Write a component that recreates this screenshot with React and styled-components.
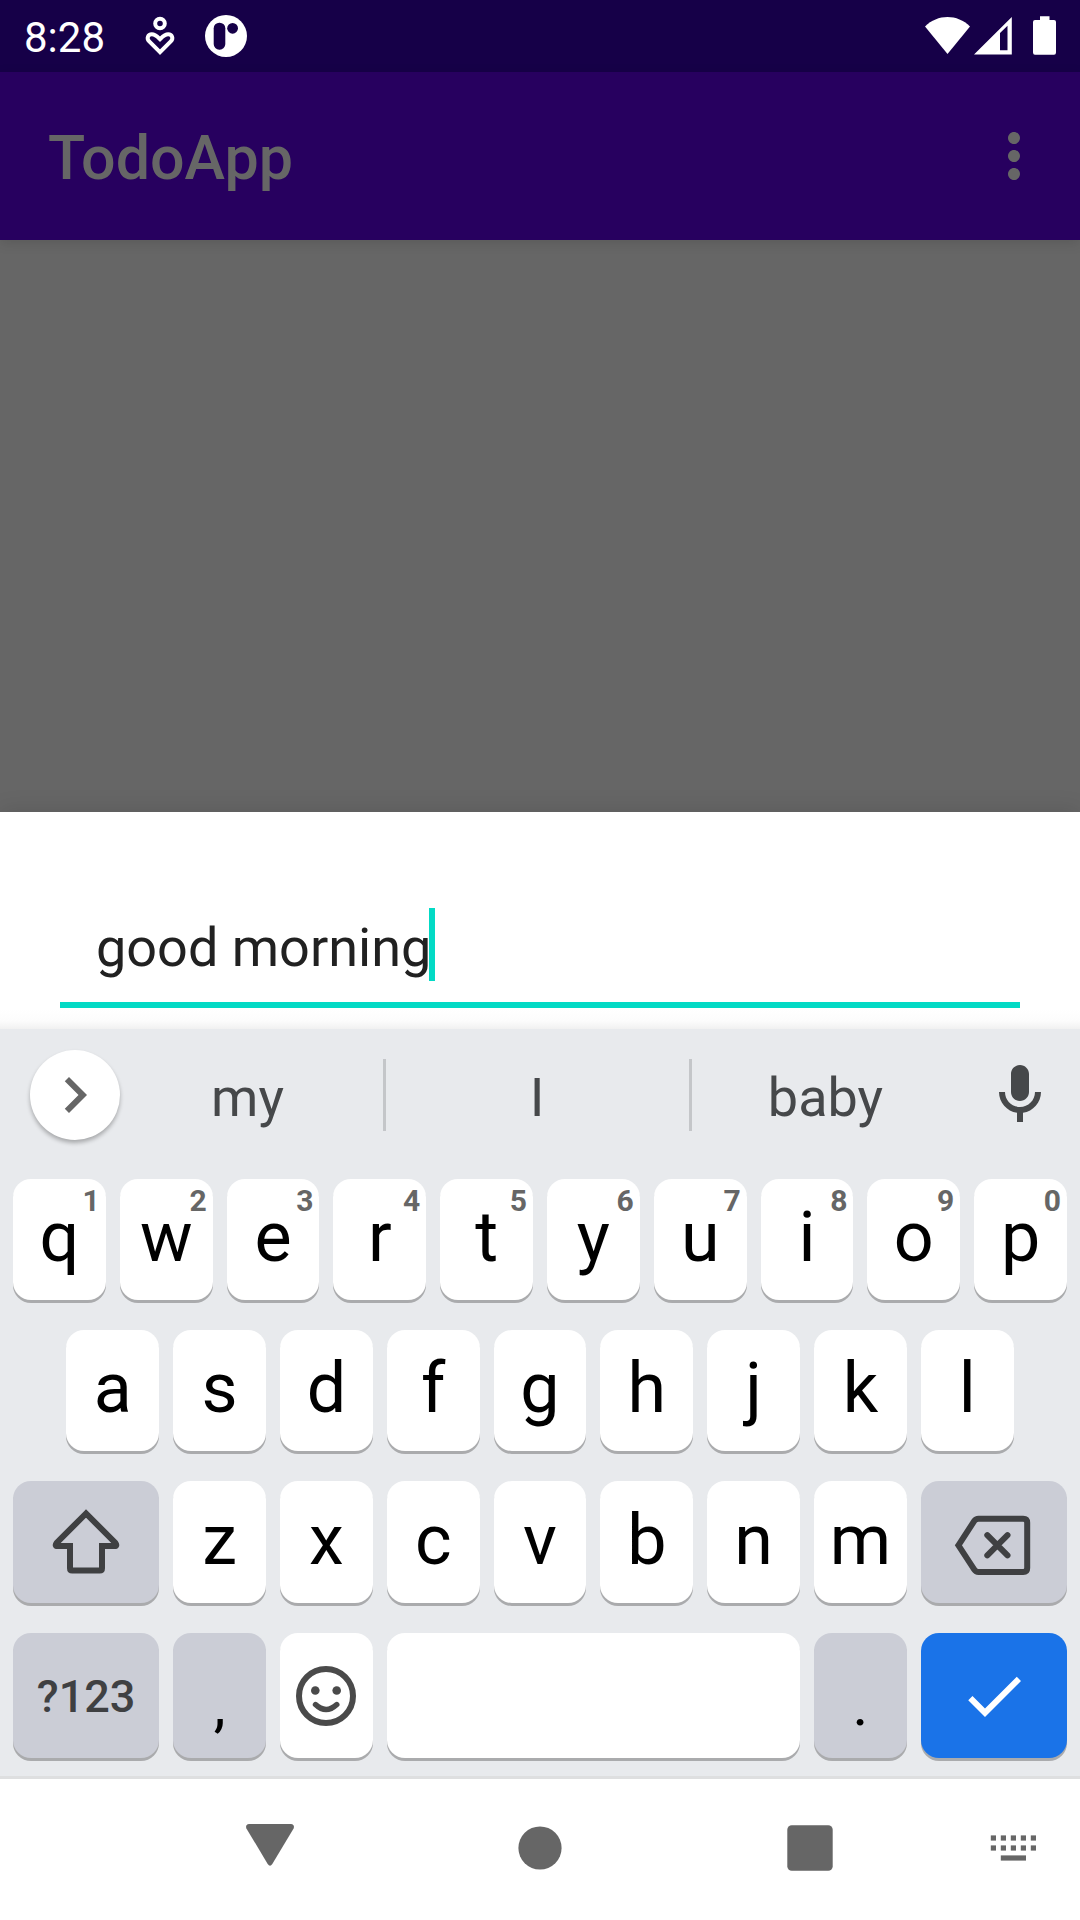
import React, { useState } from "react";
import styled, { createGlobalStyle } from "styled-components";

const GlobalStyle = createGlobalStyle`
  * { box-sizing: border-box; }
  body { margin: 0; background: #ffffff; }
  button, input { font-family: inherit; margin: 0; border: 0; padding: 0; background: none; }
  svg { display: block; flex: none; }
`;

const Screen = styled.div`
  min-height: 100vh;
  display: flex;
  flex-direction: column;
  background: #666666;
  font-family: Roboto, "Noto Sans", sans-serif;
`;

const StatusBar = styled.div`
  height: 72px;
  padding: 0 24px;
  display: flex;
  align-items: center;
  justify-content: space-between;
  background: #160048;
  color: #ffffff;
`;

const StatusGroup = styled.div`
  display: flex;
  align-items: center;
  gap: ${(p) => p.$gap}px;
`;

const Clock = styled.time`
  padding-top: 3px;
  font-size: 42px;
  line-height: 48px;
  margin-right: 10px;
`;

const AppBar = styled.header`
  height: 168px;
  padding: 0 30px 0 48px;
  display: flex;
  align-items: center;
  justify-content: space-between;
  background: #27005f;
  box-shadow: 0 3px 12px rgba(0, 0, 0, 0.12);
  color: #666666;
`;

const Title = styled.h1`
  margin: 0;
  padding-top: 4px;
  font-size: 61px;
  line-height: 72px;
  font-weight: 500;
`;

const IconButton = styled.button`
  display: flex;
  align-items: center;
  justify-content: center;
  color: inherit;
`;

const Backdrop = styled.main`
  flex: 1;
`;

const Sheet = styled.form`
  padding: 96px 60px 21px;
  background: linear-gradient(to top, #f1f1f1, #fcfcfc 8px, #ffffff 20px);
  box-shadow: 0 -3px 20px rgba(0, 0, 0, 0.1);
`;

const Field = styled.label`
  display: flex;
  align-items: flex-start;
  padding: 0 36px 21px;
  border-bottom: 6px solid #03dac5;
`;

const TextInput = styled.input`
  field-sizing: content;
  height: 73px;
  padding-top: 6px;
  font-size: 54px;
  line-height: 67px;
  color: #212121;
  caret-color: transparent;
  outline: none;
`;

const Caret = styled.span`
  width: 6px;
  height: 73px;
  margin-left: -2px;
  background: #03dac5;
`;

const Keyboard = styled.section`
  background: #e8eaed;
  border-bottom: 3px solid #dedfe0;
`;

const Suggestions = styled.div`
  height: 132px;
  display: grid;
  grid-template-columns: 113px 270fr 306fr 271fr 120px;
  align-items: center;
  color: #46484a;
`;

const ExpandButton = styled(IconButton)`
  width: 90px;
  height: 90px;
  margin-left: 30px;
  border-radius: 50%;
  background: #ffffff;
  color: #666666;
  box-shadow: 0 3px 4px rgba(0, 0, 0, 0.28);
`;

const Suggestion = styled.button`
  height: 72px;
  border-left: ${(p) => (p.$divided ? "3px solid #c4c6c9" : "0")};
  padding: 5px 1px 0 0;
  font-size: 54px;
  line-height: 66px;
  color: inherit;
`;

const Keys = styled.div`
  display: flex;
  flex-direction: column;
  gap: 30px;
  padding: 18px 13px;
`;

const KeyRow = styled.div`
  display: grid;
  grid-template-columns: repeat(20, 1fr);
  column-gap: 14px;
  grid-auto-rows: ${(p) => p.$height}px;
`;

const tones = {
  light: { background: "#ffffff", color: "#000000" },
  dark: { background: "#cbcdd6", color: "#3f4042" },
  action: { background: "#1a73e8", color: "#ffffff" },
};

const Key = styled.button`
  position: relative;
  grid-column: ${(p) => p.$start || "auto"} / span ${(p) => p.$span || 2};
  display: flex;
  align-items: center;
  justify-content: center;
  border-radius: 18px;
  background: ${(p) => tones[p.$tone || "light"].background};
  color: ${(p) => tones[p.$tone || "light"].color};
  box-shadow: 0 3px 0 #aaabad;
`;

const LetterKey = styled(Key)`
  padding-bottom: 5px;
  font-size: 70px;
  line-height: 82px;
`;

const ModeKey = styled(Key)`
  padding-top: 2px;
  font-size: 45px;
  line-height: 54px;
  font-weight: 500;
`;

const PunctuationKey = styled(Key)`
  padding-top: 18px;
  font-size: 60px;
  line-height: 70px;
  color: #000000;
`;

const Hint = styled.span`
  position: absolute;
  top: 7px;
  right: 6px;
  font-size: 30px;
  line-height: 30px;
  font-weight: 700;
  color: #666666;
`;

const NavBar = styled.nav`
  height: 141px;
  padding-bottom: 3px;
  display: grid;
  grid-template-columns: 1fr 2fr 2fr 2fr 1fr;
  background: #ffffff;
  color: #666666;
`;

const NavButton = styled(IconButton)`
  grid-column: ${(p) => p.$column};
`;

const MaterialIcon = ({ d }) => (
  <svg width="72" height="72" viewBox="0 0 24 24" fill="currentColor" aria-hidden="true">
    <path d={d} />
  </svg>
);

const paths = {
  more: "M12 8c1.1 0 2-.9 2-2s-.9-2-2-2-2 .9-2 2 .9 2 2 2zm0 2c-1.1 0-2 .9-2 2s.9 2 2 2 2-.9 2-2-.9-2-2-2zm0 6c-1.1 0-2 .9-2 2s.9 2 2 2 2-.9 2-2-.9-2-2-2z",
  chevron: "M10 6L8.59 7.41 13.17 12l-4.58 4.59L10 18l6-6z",
  mic: "M12 14c1.66 0 3-1.34 3-3V5c0-1.66-1.34-3-3-3S9 3.34 9 5v6c0 1.66 1.34 3 3 3zm5-3c0 2.76-2.24 5-5 5s-5-2.24-5-5H5c0 3.53 2.61 6.43 6 6.92V21h2v-3.08c3.39-.49 6-3.39 6-6.92h-2z",
  check: "M9 16.17L4.83 12l-1.42 1.41L9 19 21 7l-1.41-1.41z",
};

const HeartPersonIcon = () => (
  <svg width="32" height="48" viewBox="0 0 32 48" fill="none" stroke="#fff" strokeWidth="4" aria-hidden="true">
    <circle cx="16" cy="11.5" r="4.8" />
    <path d="M16 40.2 L5.2 29.4 C2.2 26.4 4 22.3 7.8 22.3 C11.4 22.3 13 24.2 16 27.2 C19 24.2 20.6 22.3 24.2 22.3 C28 22.3 29.8 26.4 26.8 29.4 Z" />
  </svg>
);

const BadgeIcon = () => (
  <svg width="42" height="42" viewBox="0 0 42 42" aria-hidden="true">
    <circle cx="21" cy="21" r="21" fill="#fff" />
    <rect x="8.7" y="7.7" width="11.6" height="27" rx="5.6" fill="#160048" />
    <circle cx="27.6" cy="13.3" r="5.4" fill="#160048" />
  </svg>
);

const WifiIcon = () => (
  <svg width="45" height="48" viewBox="0 0 45 48" fill="#fff" aria-hidden="true">
    <path d="M0 14.5 C12.5 1.8 32.5 1.8 45 14.5 L22.5 42 Z" />
  </svg>
);

const SignalIcon = () => (
  <svg width="38" height="48" viewBox="0 0 38 48" fill="#fff" fillRule="evenodd" aria-hidden="true">
    <path d="M0 42.5 L37.8 5 V42.5 Z M26 21 V38.3 H33.5 V13.8 Z" />
  </svg>
);

const BatteryIcon = () => (
  <svg width="23" height="48" viewBox="0 0 23 48" fill="#fff" aria-hidden="true">
    <path d="M7 4.2 H16.5 V8 H21 Q23 8 23 10 V40.5 Q23 42.7 21 42.7 H2 Q0 42.7 0 40.5 V10 Q0 8 2 8 H7 Z" />
  </svg>
);

const ShiftIcon = () => (
  <svg width="72" height="72" viewBox="0 0 72 72" fill="none" stroke="currentColor" strokeWidth="6" aria-hidden="true">
    <path d="M36 7.5 L6.6 36.9 Q4.4 40 7.6 40 H20 V62.3 Q20 64.5 22.2 64.5 H49.8 Q52 64.5 52 62.3 V40 H64.4 Q67.6 40 65.4 36.9 Z" />
  </svg>
);

const BackspaceIcon = () => (
  <svg width="84" height="72" viewBox="0 0 84 72" fill="none" stroke="currentColor" strokeWidth="6" aria-hidden="true">
    <path d="M6.4 39.3 L22.3 14.9 Q23.8 12.7 26.5 12.7 H71.2 Q75.2 12.7 75.2 16.7 V62 Q75.2 66 71.2 66 H26.5 Q23.8 66 22.3 63.7 Z" />
    <path d="M35.3 29.2 L55.5 49.4 M55.5 29.2 L35.3 49.4" strokeLinecap="round" />
  </svg>
);

const SmileyIcon = () => (
  <svg width="60" height="60" viewBox="0 0 60 60" fill="none" stroke="#4a4a4a" aria-hidden="true">
    <circle cx="30" cy="30" r="27" strokeWidth="6" />
    <circle cx="19.3" cy="24.5" r="4.3" fill="#4a4a4a" stroke="none" />
    <circle cx="40.7" cy="24.5" r="4.3" fill="#4a4a4a" stroke="none" />
    <path d="M19.5 38.5 Q30 48.5 40.8 38.5" strokeWidth="5.4" strokeLinecap="round" />
  </svg>
);

const BackIcon = () => (
  <svg width="48" height="48" viewBox="0 0 48 48" fill="currentColor" aria-hidden="true">
    <path d="M3 0 H45 Q49 0.6 47.6 4.4 L26.3 40 Q24 43.6 21.7 40 L0.4 4.4 Q-1 0.6 3 0 Z" />
  </svg>
);

const HomeIcon = () => (
  <svg width="48" height="48" viewBox="0 0 48 48" fill="currentColor" aria-hidden="true">
    <circle cx="24" cy="24" r="21.6" />
  </svg>
);

const RecentIcon = () => (
  <svg width="48" height="48" viewBox="0 0 48 48" fill="currentColor" aria-hidden="true">
    <rect x="1.3" y="1.2" width="45.4" height="45.6" rx="4.5" />
  </svg>
);

const KeyboardIcon = () => (
  <svg width="48" height="48" viewBox="0 0 48 48" fill="currentColor" aria-hidden="true">
    {[0, 1, 2, 3, 4].map((i) => (
      <React.Fragment key={i}>
        <rect x={1.8 + i * 10} y="11.4" width="5.2" height="5.2" />
        <rect x={1.8 + i * 10} y="21.4" width="5.2" height="5.2" />
      </React.Fragment>
    ))}
    <rect x="11.8" y="31.4" width="25.2" height="5.2" />
  </svg>
);

const topRow = [..."qwertyuiop"];
const middleRow = [..."asdfghjkl"];
const bottomRow = [..."zxcvbnm"];
const suggestions = ["my", "I", "baby"];

export default function App() {
  const [task, setTask] = useState("good morning");
  const type = (text) => setTask((value) => value + text);

  return (
    <Screen>
      <GlobalStyle />
      <StatusBar>
        <StatusGroup $gap={29}>
          <Clock>8:28</Clock>
          <HeartPersonIcon />
          <BadgeIcon />
        </StatusGroup>
        <StatusGroup $gap={21}>
          <StatusGroup $gap={4}>
            <WifiIcon />
            <SignalIcon />
          </StatusGroup>
          <BatteryIcon />
        </StatusGroup>
      </StatusBar>
      <AppBar>
        <Title>TodoApp</Title>
        <IconButton type="button" aria-label="More options">
          <MaterialIcon d={paths.more} />
        </IconButton>
      </AppBar>
      <Backdrop />
      <Sheet onSubmit={(e) => e.preventDefault()}>
        <Field>
          <TextInput
            type="text"
            aria-label="New task"
            value={task}
            onChange={(e) => setTask(e.target.value)}
          />
          <Caret />
        </Field>
      </Sheet>
      <Keyboard aria-label="Keyboard">
        <Suggestions>
          <ExpandButton type="button" aria-label="Expand toolbar">
            <MaterialIcon d={paths.chevron} />
          </ExpandButton>
          {suggestions.map((word, i) => (
            <Suggestion type="button" key={word} $divided={i > 0} onClick={() => type(` ${word}`)}>
              {word}
            </Suggestion>
          ))}
          <IconButton type="button" aria-label="Voice input">
            <MaterialIcon d={paths.mic} />
          </IconButton>
        </Suggestions>
        <Keys>
          <KeyRow $height={121}>
            {topRow.map((letter, i) => (
              <LetterKey type="button" key={letter} onClick={() => type(letter)}>
                {letter}
                <Hint>{(i + 1) % 10}</Hint>
              </LetterKey>
            ))}
          </KeyRow>
          <KeyRow $height={121}>
            {middleRow.map((letter, i) => (
              <LetterKey type="button" key={letter} $start={i === 0 ? 2 : undefined} onClick={() => type(letter)}>
                {letter}
              </LetterKey>
            ))}
          </KeyRow>
          <KeyRow $height={122}>
            <Key type="button" $span={3} $tone="dark" aria-label="Shift">
              <ShiftIcon />
            </Key>
            {bottomRow.map((letter) => (
              <LetterKey type="button" key={letter} onClick={() => type(letter)}>
                {letter}
              </LetterKey>
            ))}
            <Key
              type="button"
              $span={3}
              $tone="dark"
              aria-label="Delete"
              onClick={() => setTask((value) => value.slice(0, -1))}
            >
              <BackspaceIcon />
            </Key>
          </KeyRow>
          <KeyRow $height={125}>
            <ModeKey type="button" $span={3} $tone="dark">?123</ModeKey>
            <PunctuationKey type="button" $tone="dark" onClick={() => type(",")}>,</PunctuationKey>
            <Key type="button" aria-label="Emoji">
              <SmileyIcon />
            </Key>
            <Key type="button" $span={8} aria-label="Space" onClick={() => type(" ")} />
            <PunctuationKey type="button" $tone="dark" onClick={() => type(".")}>.</PunctuationKey>
            <Key type="button" $span={3} $tone="action" aria-label="Done">
              <MaterialIcon d={paths.check} />
            </Key>
          </KeyRow>
        </Keys>
      </Keyboard>
      <NavBar>
        <NavButton type="button" $column={2} aria-label="Back"><BackIcon /></NavButton>
        <NavButton type="button" $column={3} aria-label="Home"><HomeIcon /></NavButton>
        <NavButton type="button" $column={4} aria-label="Recent apps"><RecentIcon /></NavButton>
        <NavButton type="button" $column={5} aria-label="Switch keyboard"><KeyboardIcon /></NavButton>
      </NavBar>
    </Screen>
  );
}
